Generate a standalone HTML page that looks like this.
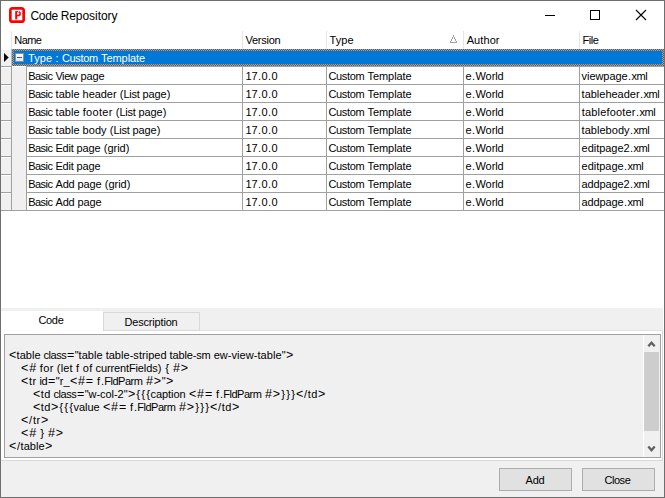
<!DOCTYPE html>
<html lang="en">
<head>
<meta charset="utf-8">
<title>Code Repository</title>
<style>
html,body{margin:0;padding:0;}
body{width:665px;height:498px;overflow:hidden;background:#fff;position:relative;
  font-family:"Liberation Sans","DejaVu Sans",sans-serif;font-size:11px;color:#000;}
.abs{position:absolute;}
.t{position:absolute;white-space:pre;line-height:13px;height:13px;font-size:11px;word-spacing:-0.0625px;}
#win{left:0;top:0;width:665px;height:498px;box-sizing:border-box;border:1px solid #6e6e6e;z-index:50;}
#title{left:30.5px;top:8px;font-size:12px;line-height:16px;height:16px;white-space:pre;letter-spacing:-0.05px;word-spacing:-0.45px;}
.hsep{position:absolute;top:31px;width:1px;height:18px;background:#e5e5e5;}
.hl{position:absolute;height:1px;background:#a0a0a0;}
.vl{position:absolute;width:1px;background:#a0a0a0;}
#sel{left:12px;top:49px;width:652px;height:17px;background:#0078d7;}
#exp{box-sizing:border-box;border:1px solid #8e8e8e;background:linear-gradient(#fff,#e4e4e4);}
.btn{position:absolute;top:468px;width:73px;height:23px;box-sizing:border-box;border:1px solid #adadad;background:#e1e1e1;}
</style>
</head>
<body>
<!-- title bar -->
<svg class="abs" style="left:9px;top:7px" width="16" height="16" viewBox="0 0 16 16">
  <rect x="0" y="0" width="16" height="16" rx="3.6" ry="3.6" fill="#f00"/>
  <rect x="2.7" y="2.7" width="10.6" height="10.6" rx="0.6" ry="0.6" fill="#fff"/>
  <path d="M7.2 4.1V12.4" stroke="#f00" stroke-width="2" fill="none"/>
  <path d="M7.2 4.8H9.4C11.7 4.8 11.7 8.6 9.4 8.6H8" stroke="#f00" stroke-width="1.5" fill="none"/>
  <path d="M9.5 4.1L8.3 7.2" stroke="#fff" stroke-width="0.9" fill="none"/>
</svg>
<div id="title" class="abs"><span style="letter-spacing:-0.35px">Code</span> Repository</div>
<svg class="abs" style="left:526px;top:1px" width="138" height="30" viewBox="0 0 138 30" shape-rendering="crispEdges">
  <rect x="19" y="14" width="10" height="1" fill="#000"/>
  <rect x="64.5" y="9.5" width="9" height="9" fill="none" stroke="#000" stroke-width="1"/>
  <g shape-rendering="auto" stroke="#000" stroke-width="1.1"><path d="M110 9L120 19M120 9L110 19" fill="none"/></g>
</svg>

<!-- grid header -->
<div class="hsep" style="left:11px"></div>
<div class="hsep" style="left:242px"></div>
<div class="hsep" style="left:326px"></div>
<div class="hsep" style="left:463px"></div>
<div class="hsep" style="left:579px"></div>
<div class="t" style="left:14.6px;top:34px"><span style="letter-spacing:-0.586px;margin:0 0.293px 0 -0.293px">Name</span></div>
<div class="t" style="left:245.6px;top:34px"><span style="letter-spacing:-0.243px;margin:0 0.122px 0 -0.122px">Version</span></div>
<div class="t" style="left:329.6px;top:34px"><span style="letter-spacing:0.035px;margin:0 -0.018px 0 0.018px">Type</span></div>
<div class="t" style="left:466.6px;top:34px"><span style="letter-spacing:0.096px;margin:0 -0.048px 0 0.048px">Author</span></div>
<div class="t" style="left:582.6px;top:34px"><span style="letter-spacing:-0.434px;margin:0 0.217px 0 -0.217px">File</span></div>
<svg class="abs" style="left:449px;top:34px" width="10" height="10" viewBox="0 0 10 10" shape-rendering="crispEdges">
  <path d="M4 1h1v2h-1zM3 3h1v2h-1zM5 3h1v2h-1zM2 5h1v2h-1zM6 5h1v2h-1zM1 7h1v1h-1zM7 7h1v1h-1zM1 8h7v1h-7z" fill="#a0a0a0"/>
</svg>
<!-- grid body -->
<div id="grid">
<div class="abs" style="left:1px;top:50px;width:11px;height:160px;background:#f0f0f0"></div>
<div class="abs" style="left:12px;top:66px;width:14px;height:144px;background:#f0f0f0"></div>
<div class="abs" style="left:12px;top:66px;width:14px;height:1px;background:#fff"></div>
<div class="abs" style="left:1px;top:67px;width:10px;height:1px;background:#fff"></div>
<div class="abs" style="left:1px;top:85px;width:10px;height:1px;background:#fff"></div>
<div class="abs" style="left:1px;top:103px;width:10px;height:1px;background:#fff"></div>
<div class="abs" style="left:1px;top:121px;width:10px;height:1px;background:#fff"></div>
<div class="abs" style="left:1px;top:139px;width:10px;height:1px;background:#fff"></div>
<div class="abs" style="left:1px;top:157px;width:10px;height:1px;background:#fff"></div>
<div class="abs" style="left:1px;top:175px;width:10px;height:1px;background:#fff"></div>
<div class="abs" style="left:1px;top:193px;width:10px;height:1px;background:#fff"></div>
<div id="sel" class="abs"></div>
<div class="abs" style="left:11px;top:49px;width:1px;height:17px;background:#8cc2ee"></div>
<svg class="abs" style="left:12px;top:49px" width="652" height="17" viewBox="0 0 652 17" shape-rendering="crispEdges">
  <defs><pattern id="chk" width="2" height="2" patternUnits="userSpaceOnUse"><rect x="0" y="0" width="1" height="1" fill="#ff8728"/><rect x="1" y="1" width="1" height="1" fill="#ff8728"/></pattern></defs>
  <path d="M0 0H652V17H0ZM2 2V15H650V2Z" fill="url(#chk)" fill-rule="evenodd"/>
</svg>
<svg class="abs" style="left:3px;top:52px" width="8" height="11" viewBox="0 0 8 11"><path d="M1 1L5.7 5.5L1 10Z" fill="#000"/></svg>
<div class="abs" id="exp" style="left:15px;top:53px;width:9px;height:9px"></div>
<div class="abs" style="left:17px;top:57px;width:5px;height:1px;background:#3b52a4"></div>
<div class="t" style="left:28.1px;top:52px;color:#fff"><span style="letter-spacing:0.035px;margin:0 -0.018px 0 0.018px">Type</span> <span style="letter-spacing:0.938px;margin:0 -0.469px 0 0.469px">:</span> <span style="letter-spacing:-0.318px;margin:0 0.159px 0 -0.159px">Custom</span> <span style="letter-spacing:-0.080px;margin:0 0.040px 0 -0.040px">Template</span></div>
<div class="hl" style="left:1px;top:66px;width:11px"></div>
<div class="hl" style="left:26px;top:66px;width:638px"></div>
<div class="hl" style="left:1px;top:84px;width:11px"></div>
<div class="hl" style="left:26px;top:84px;width:638px"></div>
<div class="hl" style="left:1px;top:102px;width:11px"></div>
<div class="hl" style="left:26px;top:102px;width:638px"></div>
<div class="hl" style="left:1px;top:120px;width:11px"></div>
<div class="hl" style="left:26px;top:120px;width:638px"></div>
<div class="hl" style="left:1px;top:138px;width:11px"></div>
<div class="hl" style="left:26px;top:138px;width:638px"></div>
<div class="hl" style="left:1px;top:156px;width:11px"></div>
<div class="hl" style="left:26px;top:156px;width:638px"></div>
<div class="hl" style="left:1px;top:174px;width:11px"></div>
<div class="hl" style="left:26px;top:174px;width:638px"></div>
<div class="hl" style="left:1px;top:192px;width:11px"></div>
<div class="hl" style="left:26px;top:192px;width:638px"></div>
<div class="hl" style="left:1px;top:210px;width:11px"></div>
<div class="hl" style="left:26px;top:210px;width:638px"></div>
<div class="hl" style="left:1px;top:210px;width:663px"></div>
<div class="vl" style="left:11px;top:66px;height:145px"></div>
<div class="vl" style="left:26px;top:66px;height:145px"></div>
<div class="vl" style="left:242px;top:66px;height:145px"></div>
<div class="vl" style="left:326px;top:66px;height:145px"></div>
<div class="vl" style="left:463px;top:66px;height:145px"></div>
<div class="vl" style="left:579px;top:66px;height:145px"></div>
<div class="t" style="left:28.6px;top:70px"><span style="letter-spacing:-0.581px;margin:0 0.291px 0 -0.291px">Basic</span> <span style="letter-spacing:-0.414px;margin:0 0.207px 0 -0.207px">View</span> <span style="letter-spacing:-0.121px;margin:0 0.061px 0 -0.061px">page</span></div>
<div class="t" style="left:245.6px;top:70px"><span style="letter-spacing:-0.125px;margin:0 0.062px 0 -0.062px">17</span><span style="letter-spacing:0.938px;margin:0 -0.469px 0 0.469px">.</span><span style="letter-spacing:-0.125px;margin:0 0.062px 0 -0.062px">0</span><span style="letter-spacing:0.938px;margin:0 -0.469px 0 0.469px">.</span><span style="letter-spacing:-0.125px;margin:0 0.062px 0 -0.062px">0</span></div>
<div class="t" style="left:328.6px;top:70px"><span style="letter-spacing:-0.318px;margin:0 0.159px 0 -0.159px">Custom</span> <span style="letter-spacing:-0.080px;margin:0 0.040px 0 -0.040px">Template</span></div>
<div class="t" style="left:465.6px;top:70px"><span style="letter-spacing:-0.125px;margin:0 0.062px 0 -0.062px">e</span><span style="letter-spacing:0.938px;margin:0 -0.469px 0 0.469px">.</span><span style="letter-spacing:-0.106px;margin:0 0.053px 0 -0.053px">World</span></div>
<div class="t" style="left:581.6px;top:70px"><span style="letter-spacing:-0.061px;margin:0 0.030px 0 -0.030px">viewpage</span><span style="letter-spacing:0.938px;margin:0 -0.469px 0 0.469px">.</span><span style="letter-spacing:-0.370px;margin:0 0.185px 0 -0.185px">xml</span></div>
<div class="t" style="left:28.6px;top:88px"><span style="letter-spacing:-0.581px;margin:0 0.291px 0 -0.291px">Basic</span> <span style="letter-spacing:0.028px;margin:0 -0.014px 0 0.014px">table</span> <span style="letter-spacing:-0.044px;margin:0 0.022px 0 -0.022px">header</span> <span style="letter-spacing:0.328px;margin:0 -0.164px 0 0.164px">(</span><span style="letter-spacing:-0.281px;margin:0 0.141px 0 -0.141px">List</span> <span style="letter-spacing:-0.121px;margin:0 0.061px 0 -0.061px">page</span><span style="letter-spacing:0.328px;margin:0 -0.164px 0 0.164px">)</span></div>
<div class="t" style="left:245.6px;top:88px"><span style="letter-spacing:-0.125px;margin:0 0.062px 0 -0.062px">17</span><span style="letter-spacing:0.938px;margin:0 -0.469px 0 0.469px">.</span><span style="letter-spacing:-0.125px;margin:0 0.062px 0 -0.062px">0</span><span style="letter-spacing:0.938px;margin:0 -0.469px 0 0.469px">.</span><span style="letter-spacing:-0.125px;margin:0 0.062px 0 -0.062px">0</span></div>
<div class="t" style="left:328.6px;top:88px"><span style="letter-spacing:-0.318px;margin:0 0.159px 0 -0.159px">Custom</span> <span style="letter-spacing:-0.080px;margin:0 0.040px 0 -0.040px">Template</span></div>
<div class="t" style="left:465.6px;top:88px"><span style="letter-spacing:-0.125px;margin:0 0.062px 0 -0.062px">e</span><span style="letter-spacing:0.938px;margin:0 -0.469px 0 0.469px">.</span><span style="letter-spacing:-0.106px;margin:0 0.053px 0 -0.053px">World</span></div>
<div class="t" style="left:581.6px;top:88px"><span style="letter-spacing:-0.010px;margin:0 0.005px 0 -0.005px">tableheader</span><span style="letter-spacing:0.938px;margin:0 -0.469px 0 0.469px">.</span><span style="letter-spacing:-0.370px;margin:0 0.185px 0 -0.185px">xml</span></div>
<div class="t" style="left:28.6px;top:106px"><span style="letter-spacing:-0.581px;margin:0 0.291px 0 -0.291px">Basic</span> <span style="letter-spacing:0.028px;margin:0 -0.014px 0 0.014px">table</span> <span style="letter-spacing:0.310px;margin:0 -0.155px 0 0.155px">footer</span> <span style="letter-spacing:0.328px;margin:0 -0.164px 0 0.164px">(</span><span style="letter-spacing:-0.281px;margin:0 0.141px 0 -0.141px">List</span> <span style="letter-spacing:-0.121px;margin:0 0.061px 0 -0.061px">page</span><span style="letter-spacing:0.328px;margin:0 -0.164px 0 0.164px">)</span></div>
<div class="t" style="left:245.6px;top:106px"><span style="letter-spacing:-0.125px;margin:0 0.062px 0 -0.062px">17</span><span style="letter-spacing:0.938px;margin:0 -0.469px 0 0.469px">.</span><span style="letter-spacing:-0.125px;margin:0 0.062px 0 -0.062px">0</span><span style="letter-spacing:0.938px;margin:0 -0.469px 0 0.469px">.</span><span style="letter-spacing:-0.125px;margin:0 0.062px 0 -0.062px">0</span></div>
<div class="t" style="left:328.6px;top:106px"><span style="letter-spacing:-0.318px;margin:0 0.159px 0 -0.159px">Custom</span> <span style="letter-spacing:-0.080px;margin:0 0.040px 0 -0.040px">Template</span></div>
<div class="t" style="left:465.6px;top:106px"><span style="letter-spacing:-0.125px;margin:0 0.062px 0 -0.062px">e</span><span style="letter-spacing:0.938px;margin:0 -0.469px 0 0.469px">.</span><span style="letter-spacing:-0.106px;margin:0 0.053px 0 -0.053px">World</span></div>
<div class="t" style="left:581.6px;top:106px"><span style="letter-spacing:0.183px;margin:0 -0.092px 0 0.092px">tablefooter</span><span style="letter-spacing:0.938px;margin:0 -0.469px 0 0.469px">.</span><span style="letter-spacing:-0.370px;margin:0 0.185px 0 -0.185px">xml</span></div>
<div class="t" style="left:28.6px;top:124px"><span style="letter-spacing:-0.581px;margin:0 0.291px 0 -0.291px">Basic</span> <span style="letter-spacing:0.028px;margin:0 -0.014px 0 0.014px">table</span> <span style="letter-spacing:0.035px;margin:0 -0.018px 0 0.018px">body</span> <span style="letter-spacing:0.328px;margin:0 -0.164px 0 0.164px">(</span><span style="letter-spacing:-0.281px;margin:0 0.141px 0 -0.141px">List</span> <span style="letter-spacing:-0.121px;margin:0 0.061px 0 -0.061px">page</span><span style="letter-spacing:0.328px;margin:0 -0.164px 0 0.164px">)</span></div>
<div class="t" style="left:245.6px;top:124px"><span style="letter-spacing:-0.125px;margin:0 0.062px 0 -0.062px">17</span><span style="letter-spacing:0.938px;margin:0 -0.469px 0 0.469px">.</span><span style="letter-spacing:-0.125px;margin:0 0.062px 0 -0.062px">0</span><span style="letter-spacing:0.938px;margin:0 -0.469px 0 0.469px">.</span><span style="letter-spacing:-0.125px;margin:0 0.062px 0 -0.062px">0</span></div>
<div class="t" style="left:328.6px;top:124px"><span style="letter-spacing:-0.318px;margin:0 0.159px 0 -0.159px">Custom</span> <span style="letter-spacing:-0.080px;margin:0 0.040px 0 -0.040px">Template</span></div>
<div class="t" style="left:465.6px;top:124px"><span style="letter-spacing:-0.125px;margin:0 0.062px 0 -0.062px">e</span><span style="letter-spacing:0.938px;margin:0 -0.469px 0 0.469px">.</span><span style="letter-spacing:-0.106px;margin:0 0.053px 0 -0.053px">World</span></div>
<div class="t" style="left:581.6px;top:124px"><span style="letter-spacing:0.031px;margin:0 -0.016px 0 0.016px">tablebody</span><span style="letter-spacing:0.938px;margin:0 -0.469px 0 0.469px">.</span><span style="letter-spacing:-0.370px;margin:0 0.185px 0 -0.185px">xml</span></div>
<div class="t" style="left:28.6px;top:142px"><span style="letter-spacing:-0.581px;margin:0 0.291px 0 -0.291px">Basic</span> <span style="letter-spacing:-0.242px;margin:0 0.121px 0 -0.121px">Edit</span> <span style="letter-spacing:-0.121px;margin:0 0.061px 0 -0.061px">page</span> <span style="letter-spacing:0.328px;margin:0 -0.164px 0 0.164px">(</span><span style="letter-spacing:-0.086px;margin:0 0.043px 0 -0.043px">grid</span><span style="letter-spacing:0.328px;margin:0 -0.164px 0 0.164px">)</span></div>
<div class="t" style="left:245.6px;top:142px"><span style="letter-spacing:-0.125px;margin:0 0.062px 0 -0.062px">17</span><span style="letter-spacing:0.938px;margin:0 -0.469px 0 0.469px">.</span><span style="letter-spacing:-0.125px;margin:0 0.062px 0 -0.062px">0</span><span style="letter-spacing:0.938px;margin:0 -0.469px 0 0.469px">.</span><span style="letter-spacing:-0.125px;margin:0 0.062px 0 -0.062px">0</span></div>
<div class="t" style="left:328.6px;top:142px"><span style="letter-spacing:-0.318px;margin:0 0.159px 0 -0.159px">Custom</span> <span style="letter-spacing:-0.080px;margin:0 0.040px 0 -0.040px">Template</span></div>
<div class="t" style="left:465.6px;top:142px"><span style="letter-spacing:-0.125px;margin:0 0.062px 0 -0.062px">e</span><span style="letter-spacing:0.938px;margin:0 -0.469px 0 0.469px">.</span><span style="letter-spacing:-0.106px;margin:0 0.053px 0 -0.053px">World</span></div>
<div class="t" style="left:581.6px;top:142px"><span style="letter-spacing:-0.036px;margin:0 0.018px 0 -0.018px">editpage2</span><span style="letter-spacing:0.938px;margin:0 -0.469px 0 0.469px">.</span><span style="letter-spacing:-0.370px;margin:0 0.185px 0 -0.185px">xml</span></div>
<div class="t" style="left:28.6px;top:160px"><span style="letter-spacing:-0.581px;margin:0 0.291px 0 -0.291px">Basic</span> <span style="letter-spacing:-0.242px;margin:0 0.121px 0 -0.121px">Edit</span> <span style="letter-spacing:-0.121px;margin:0 0.061px 0 -0.061px">page</span></div>
<div class="t" style="left:245.6px;top:160px"><span style="letter-spacing:-0.125px;margin:0 0.062px 0 -0.062px">17</span><span style="letter-spacing:0.938px;margin:0 -0.469px 0 0.469px">.</span><span style="letter-spacing:-0.125px;margin:0 0.062px 0 -0.062px">0</span><span style="letter-spacing:0.938px;margin:0 -0.469px 0 0.469px">.</span><span style="letter-spacing:-0.125px;margin:0 0.062px 0 -0.062px">0</span></div>
<div class="t" style="left:328.6px;top:160px"><span style="letter-spacing:-0.318px;margin:0 0.159px 0 -0.159px">Custom</span> <span style="letter-spacing:-0.080px;margin:0 0.040px 0 -0.040px">Template</span></div>
<div class="t" style="left:465.6px;top:160px"><span style="letter-spacing:-0.125px;margin:0 0.062px 0 -0.062px">e</span><span style="letter-spacing:0.938px;margin:0 -0.469px 0 0.469px">.</span><span style="letter-spacing:-0.106px;margin:0 0.053px 0 -0.053px">World</span></div>
<div class="t" style="left:581.6px;top:160px"><span style="letter-spacing:-0.027px;margin:0 0.014px 0 -0.014px">editpage</span><span style="letter-spacing:0.938px;margin:0 -0.469px 0 0.469px">.</span><span style="letter-spacing:-0.370px;margin:0 0.185px 0 -0.185px">xml</span></div>
<div class="t" style="left:28.6px;top:178px"><span style="letter-spacing:-0.581px;margin:0 0.291px 0 -0.291px">Basic</span> <span style="letter-spacing:-0.193px;margin:0 0.096px 0 -0.096px">Add</span> <span style="letter-spacing:-0.121px;margin:0 0.061px 0 -0.061px">page</span> <span style="letter-spacing:0.328px;margin:0 -0.164px 0 0.164px">(</span><span style="letter-spacing:-0.086px;margin:0 0.043px 0 -0.043px">grid</span><span style="letter-spacing:0.328px;margin:0 -0.164px 0 0.164px">)</span></div>
<div class="t" style="left:245.6px;top:178px"><span style="letter-spacing:-0.125px;margin:0 0.062px 0 -0.062px">17</span><span style="letter-spacing:0.938px;margin:0 -0.469px 0 0.469px">.</span><span style="letter-spacing:-0.125px;margin:0 0.062px 0 -0.062px">0</span><span style="letter-spacing:0.938px;margin:0 -0.469px 0 0.469px">.</span><span style="letter-spacing:-0.125px;margin:0 0.062px 0 -0.062px">0</span></div>
<div class="t" style="left:328.6px;top:178px"><span style="letter-spacing:-0.318px;margin:0 0.159px 0 -0.159px">Custom</span> <span style="letter-spacing:-0.080px;margin:0 0.040px 0 -0.040px">Template</span></div>
<div class="t" style="left:465.6px;top:178px"><span style="letter-spacing:-0.125px;margin:0 0.062px 0 -0.062px">e</span><span style="letter-spacing:0.938px;margin:0 -0.469px 0 0.469px">.</span><span style="letter-spacing:-0.106px;margin:0 0.053px 0 -0.053px">World</span></div>
<div class="t" style="left:581.6px;top:178px"><span style="letter-spacing:-0.119px;margin:0 0.060px 0 -0.060px">addpage2</span><span style="letter-spacing:0.938px;margin:0 -0.469px 0 0.469px">.</span><span style="letter-spacing:-0.370px;margin:0 0.185px 0 -0.185px">xml</span></div>
<div class="t" style="left:28.6px;top:196px"><span style="letter-spacing:-0.581px;margin:0 0.291px 0 -0.291px">Basic</span> <span style="letter-spacing:-0.193px;margin:0 0.096px 0 -0.096px">Add</span> <span style="letter-spacing:-0.121px;margin:0 0.061px 0 -0.061px">page</span></div>
<div class="t" style="left:245.6px;top:196px"><span style="letter-spacing:-0.125px;margin:0 0.062px 0 -0.062px">17</span><span style="letter-spacing:0.938px;margin:0 -0.469px 0 0.469px">.</span><span style="letter-spacing:-0.125px;margin:0 0.062px 0 -0.062px">0</span><span style="letter-spacing:0.938px;margin:0 -0.469px 0 0.469px">.</span><span style="letter-spacing:-0.125px;margin:0 0.062px 0 -0.062px">0</span></div>
<div class="t" style="left:328.6px;top:196px"><span style="letter-spacing:-0.318px;margin:0 0.159px 0 -0.159px">Custom</span> <span style="letter-spacing:-0.080px;margin:0 0.040px 0 -0.040px">Template</span></div>
<div class="t" style="left:465.6px;top:196px"><span style="letter-spacing:-0.125px;margin:0 0.062px 0 -0.062px">e</span><span style="letter-spacing:0.938px;margin:0 -0.469px 0 0.469px">.</span><span style="letter-spacing:-0.106px;margin:0 0.053px 0 -0.053px">World</span></div>
<div class="t" style="left:581.6px;top:196px"><span style="letter-spacing:-0.118px;margin:0 0.059px 0 -0.059px">addpage</span><span style="letter-spacing:0.938px;margin:0 -0.469px 0 0.469px">.</span><span style="letter-spacing:-0.370px;margin:0 0.185px 0 -0.185px">xml</span></div>
</div>
<!-- bottom panel -->
<div id="bottom">
<div class="abs" style="left:1px;top:308px;width:662px;height:23px;background:#f0f0f0"></div>
<div class="abs" style="left:1px;top:311px;width:102px;height:20px;background:#fff"></div>
<div class="t" style="left:38.6px;top:314px"><span style="letter-spacing:-0.324px;margin:0 0.162px 0 -0.162px">Code</span></div>
<div class="abs" style="left:103px;top:312px;width:97px;height:19px;box-sizing:border-box;border:1px solid #d9d9d9;background:#f0f0f0"></div>
<div class="t" style="left:124.6px;top:316px"><span style="letter-spacing:-0.185px;margin:0 0.092px 0 -0.092px">Description</span></div>
<div class="abs" style="left:200px;top:330px;width:463px;height:1px;background:#e0e0e0"></div>
<div class="abs" style="left:662px;top:330px;width:1px;height:131px;background:#d9d9d9"></div>
<div class="abs" style="left:1px;top:460px;width:662px;height:1px;background:#d9d9d9"></div>
<div class="abs" id="memo" style="left:4px;top:334px;width:657px;height:124px;box-sizing:border-box;border:1px solid #a0a0a0;background:#f0f0f0"></div>
<div class="t" style="left:8.6px;top:349px"><span style="font-size:12.5px;line-height:0;letter-spacing:0.688px;margin:0 -0.344px 0 0.344px">&lt;</span><span style="letter-spacing:0.028px;margin:0 -0.014px 0 0.014px">table</span> <span style="letter-spacing:-0.412px;margin:0 0.206px 0 -0.206px">class</span><span style="font-size:12.5px;line-height:0;letter-spacing:0.688px;margin:0 -0.344px 0 0.344px">=</span><span style="letter-spacing:0.094px;margin:0 -0.047px 0 0.047px">"</span><span style="letter-spacing:0.028px;margin:0 -0.014px 0 0.014px">table</span> <span style="letter-spacing:0.035px;margin:0 -0.017px 0 0.017px">table-striped</span> <span style="letter-spacing:-0.148px;margin:0 0.074px 0 -0.074px">table-sm</span> <span style="letter-spacing:0.058px;margin:0 -0.029px 0 0.029px">ew-view-table</span><span style="letter-spacing:0.094px;margin:0 -0.047px 0 0.047px">"</span><span style="font-size:12.5px;line-height:0;letter-spacing:0.688px;margin:0 -0.344px 0 0.344px">&gt;</span></div>
<div class="t" style="left:20.6px;top:362px"><span style="font-size:12.5px;line-height:0;letter-spacing:0.867px;margin:0 -0.434px 0 0.434px">&lt;#</span> <span style="letter-spacing:0.385px;margin:0 -0.193px 0 0.193px">for</span> <span style="letter-spacing:0.328px;margin:0 -0.164px 0 0.164px">(</span><span style="letter-spacing:0.125px;margin:0 -0.062px 0 0.062px">let</span> <span style="letter-spacing:0.938px;margin:0 -0.469px 0 0.469px">f</span> <span style="letter-spacing:0.406px;margin:0 -0.203px 0 0.203px">of</span> <span style="letter-spacing:-0.121px;margin:0 0.061px 0 -0.061px">currentFields</span><span style="letter-spacing:0.328px;margin:0 -0.164px 0 0.164px">)</span> <span style="font-size:11.5px;line-height:0;letter-spacing:1.156px;margin:0 -0.578px 0 0.578px">{</span> <span style="font-size:12.5px;line-height:0;letter-spacing:0.867px;margin:0 -0.434px 0 0.434px">#&gt;</span></div>
<div class="t" style="left:20.6px;top:375px"><span style="font-size:12.5px;line-height:0;letter-spacing:0.688px;margin:0 -0.344px 0 0.344px">&lt;</span><span style="letter-spacing:0.633px;margin:0 -0.316px 0 0.316px">tr</span> <span style="letter-spacing:-0.281px;margin:0 0.141px 0 -0.141px">id</span><span style="font-size:12.5px;line-height:0;letter-spacing:0.688px;margin:0 -0.344px 0 0.344px">=</span><span style="letter-spacing:0.094px;margin:0 -0.047px 0 0.047px">"</span><span style="letter-spacing:0.109px;margin:0 -0.055px 0 0.055px">r_</span><span style="font-size:12.5px;line-height:0;letter-spacing:0.812px;margin:0 -0.406px 0 0.406px">&lt;#=</span> <span style="letter-spacing:0.938px;margin:0 -0.469px 0 0.469px">f</span><span style="letter-spacing:0.938px;margin:0 -0.469px 0 0.469px">.</span><span style="letter-spacing:-0.509px;margin:0 0.254px 0 -0.254px">FldParm</span> <span style="font-size:12.5px;line-height:0;letter-spacing:0.867px;margin:0 -0.434px 0 0.434px">#&gt;</span><span style="letter-spacing:0.094px;margin:0 -0.047px 0 0.047px">"</span><span style="font-size:12.5px;line-height:0;letter-spacing:0.688px;margin:0 -0.344px 0 0.344px">&gt;</span></div>
<div class="t" style="left:32.6px;top:388px"><span style="font-size:12.5px;line-height:0;letter-spacing:0.688px;margin:0 -0.344px 0 0.344px">&lt;</span><span style="letter-spacing:0.406px;margin:0 -0.203px 0 0.203px">td</span> <span style="letter-spacing:-0.412px;margin:0 0.206px 0 -0.206px">class</span><span style="font-size:12.5px;line-height:0;letter-spacing:0.688px;margin:0 -0.344px 0 0.344px">=</span><span style="letter-spacing:0.094px;margin:0 -0.047px 0 0.047px">"</span><span style="letter-spacing:-0.065px;margin:0 0.032px 0 -0.032px">w-col-2</span><span style="letter-spacing:0.094px;margin:0 -0.047px 0 0.047px">"</span><span style="font-size:12.5px;line-height:0;letter-spacing:0.688px;margin:0 -0.344px 0 0.344px">&gt;</span><span style="font-size:11.5px;line-height:0;letter-spacing:1.156px;margin:0 -0.578px 0 0.578px">{{{</span><span style="letter-spacing:-0.069px;margin:0 0.035px 0 -0.035px">caption</span> <span style="font-size:12.5px;line-height:0;letter-spacing:0.812px;margin:0 -0.406px 0 0.406px">&lt;#=</span> <span style="letter-spacing:0.938px;margin:0 -0.469px 0 0.469px">f</span><span style="letter-spacing:0.938px;margin:0 -0.469px 0 0.469px">.</span><span style="letter-spacing:-0.509px;margin:0 0.254px 0 -0.254px">FldParm</span> <span style="font-size:12.5px;line-height:0;letter-spacing:0.867px;margin:0 -0.434px 0 0.434px">#&gt;</span><span style="font-size:11.5px;line-height:0;letter-spacing:1.156px;margin:0 -0.578px 0 0.578px">}}}</span><span style="font-size:12.5px;line-height:0;letter-spacing:0.688px;margin:0 -0.344px 0 0.344px">&lt;</span><span style="letter-spacing:0.938px;margin:0 -0.469px 0 0.469px">/</span><span style="letter-spacing:0.406px;margin:0 -0.203px 0 0.203px">td</span><span style="font-size:12.5px;line-height:0;letter-spacing:0.688px;margin:0 -0.344px 0 0.344px">&gt;</span></div>
<div class="t" style="left:32.6px;top:401px"><span style="font-size:12.5px;line-height:0;letter-spacing:0.688px;margin:0 -0.344px 0 0.344px">&lt;</span><span style="letter-spacing:0.406px;margin:0 -0.203px 0 0.203px">td</span><span style="font-size:12.5px;line-height:0;letter-spacing:0.688px;margin:0 -0.344px 0 0.344px">&gt;</span><span style="font-size:11.5px;line-height:0;letter-spacing:1.156px;margin:0 -0.578px 0 0.578px">{{{</span><span style="letter-spacing:-0.059px;margin:0 0.030px 0 -0.030px">value</span> <span style="font-size:12.5px;line-height:0;letter-spacing:0.812px;margin:0 -0.406px 0 0.406px">&lt;#=</span> <span style="letter-spacing:0.938px;margin:0 -0.469px 0 0.469px">f</span><span style="letter-spacing:0.938px;margin:0 -0.469px 0 0.469px">.</span><span style="letter-spacing:-0.509px;margin:0 0.254px 0 -0.254px">FldParm</span> <span style="font-size:12.5px;line-height:0;letter-spacing:0.867px;margin:0 -0.434px 0 0.434px">#&gt;</span><span style="font-size:11.5px;line-height:0;letter-spacing:1.156px;margin:0 -0.578px 0 0.578px">}}}</span><span style="font-size:12.5px;line-height:0;letter-spacing:0.688px;margin:0 -0.344px 0 0.344px">&lt;</span><span style="letter-spacing:0.938px;margin:0 -0.469px 0 0.469px">/</span><span style="letter-spacing:0.406px;margin:0 -0.203px 0 0.203px">td</span><span style="font-size:12.5px;line-height:0;letter-spacing:0.688px;margin:0 -0.344px 0 0.344px">&gt;</span></div>
<div class="t" style="left:20.6px;top:414px"><span style="font-size:12.5px;line-height:0;letter-spacing:0.688px;margin:0 -0.344px 0 0.344px">&lt;</span><span style="letter-spacing:0.938px;margin:0 -0.469px 0 0.469px">/</span><span style="letter-spacing:0.633px;margin:0 -0.316px 0 0.316px">tr</span><span style="font-size:12.5px;line-height:0;letter-spacing:0.688px;margin:0 -0.344px 0 0.344px">&gt;</span></div>
<div class="t" style="left:20.6px;top:427px"><span style="font-size:12.5px;line-height:0;letter-spacing:0.867px;margin:0 -0.434px 0 0.434px">&lt;#</span> <span style="font-size:11.5px;line-height:0;letter-spacing:1.156px;margin:0 -0.578px 0 0.578px">}</span> <span style="font-size:12.5px;line-height:0;letter-spacing:0.867px;margin:0 -0.434px 0 0.434px">#&gt;</span></div>
<div class="t" style="left:8.6px;top:440px"><span style="font-size:12.5px;line-height:0;letter-spacing:0.688px;margin:0 -0.344px 0 0.344px">&lt;</span><span style="letter-spacing:0.938px;margin:0 -0.469px 0 0.469px">/</span><span style="letter-spacing:0.028px;margin:0 -0.014px 0 0.014px">table</span><span style="font-size:12.5px;line-height:0;letter-spacing:0.688px;margin:0 -0.344px 0 0.344px">&gt;</span></div>
<div class="abs" style="left:644px;top:352px;width:15px;height:79px;background:#cdcdcd"></div>
<svg class="abs" style="left:643px;top:335px" width="17" height="122" viewBox="0 0 17 122"><rect x="0" y="0" width="1" height="122" fill="#fff"/><path d="M5.3 11.3L8.5 7.7L11.7 11.3" fill="none" stroke="#606060" stroke-width="2.3"/><path d="M5.3 111.6L8.5 115.2L11.7 111.6" fill="none" stroke="#606060" stroke-width="2.3"/></svg>
<div class="abs" style="left:1px;top:461px;width:663px;height:36px;background:#f0f0f0"></div>
<div class="btn" style="left:499px"><div class="t" style="left:25.6px;top:5px"><span style="letter-spacing:-0.193px;margin:0 0.096px 0 -0.096px">Add</span></div></div>
<div class="btn" style="left:582px"><div class="t" style="left:21.6px;top:5px"><span style="letter-spacing:-0.425px;margin:0 0.212px 0 -0.212px">Close</span></div></div>
</div>
<div id="win" class="abs"></div>
</body>
</html>
